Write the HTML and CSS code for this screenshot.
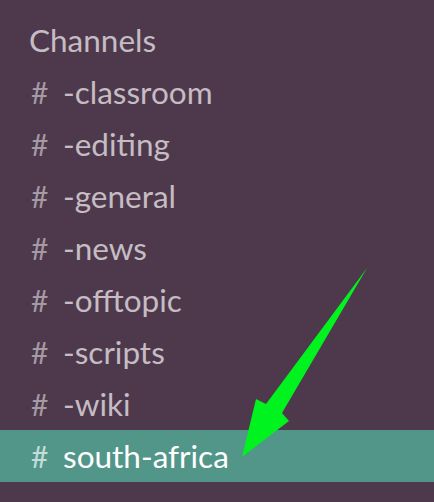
FILE: index.html
```html
<!DOCTYPE html>
<html lang="en">

<head>
    <meta charset="UTF-8">
    <meta name="viewport" content="width=device-width, initial-scale=1.0">
    <title>Channels</title>
    <link rel="stylesheet" href="styles.css">
</head>

<body>
    <div class="sidebar">
        <h2 class="title">Channels</h2>
        <ul class="channels">
            <li><span class="hash">#</span>-classroom</li>
            <li><span class="hash">#</span>-editing</li>
            <li><span class="hash">#</span>-general</li>
            <li><span class="hash">#</span>-news</li>
            <li><span class="hash">#</span>-offtopic</li>
            <li><span class="hash">#</span>-scripts</li>
            <li><span class="hash">#</span>-wiki</li>
            <li class="active"><span class="hash">#</span>south-africa</li>
        </ul>
        <!-- 箭头标注 -->
        <svg class="arrow" width="434" height="502" viewBox="0 0 434 502">
            <polygon points="367,268 282,413 289,421 242,457 256,399 266,404" fill="#00f21f" />
        </svg>
    </div>
</body>

</html>
```

FILE: styles.css
```css
* {
    margin: 0;
    padding: 0;
}

body {
    background-color: #4d394b;
    font-family: Lato, "Open Sans", sans-serif;
}

.sidebar {
    position: relative;
    width: 434px;
    height: 502px;
    overflow: hidden;
}

.title {
    height: 52px;
    line-height: 52px;
    margin-top: 14px;
    padding-left: 29px;
    font-size: 31.5px;
    font-weight: 400;
    color: #c5bcc4;
}

.channels {
    list-style-type: none;
}

.channels li {
    display: flex;
    align-items: center;
    height: 52px;
    padding-left: 31px;
    font-size: 31.5px;
    color: #c5bcc4;
}

.hash {
    width: 32px;
    font-size: 30px;
    color: #a59aa4;
}

.channels .active {
    background-color: #52968a;
    color: #fff;
}

.active .hash {
    color: #c3ddd8;
}

.arrow {
    position: absolute;
    left: 0;
    top: 0;
}
```
